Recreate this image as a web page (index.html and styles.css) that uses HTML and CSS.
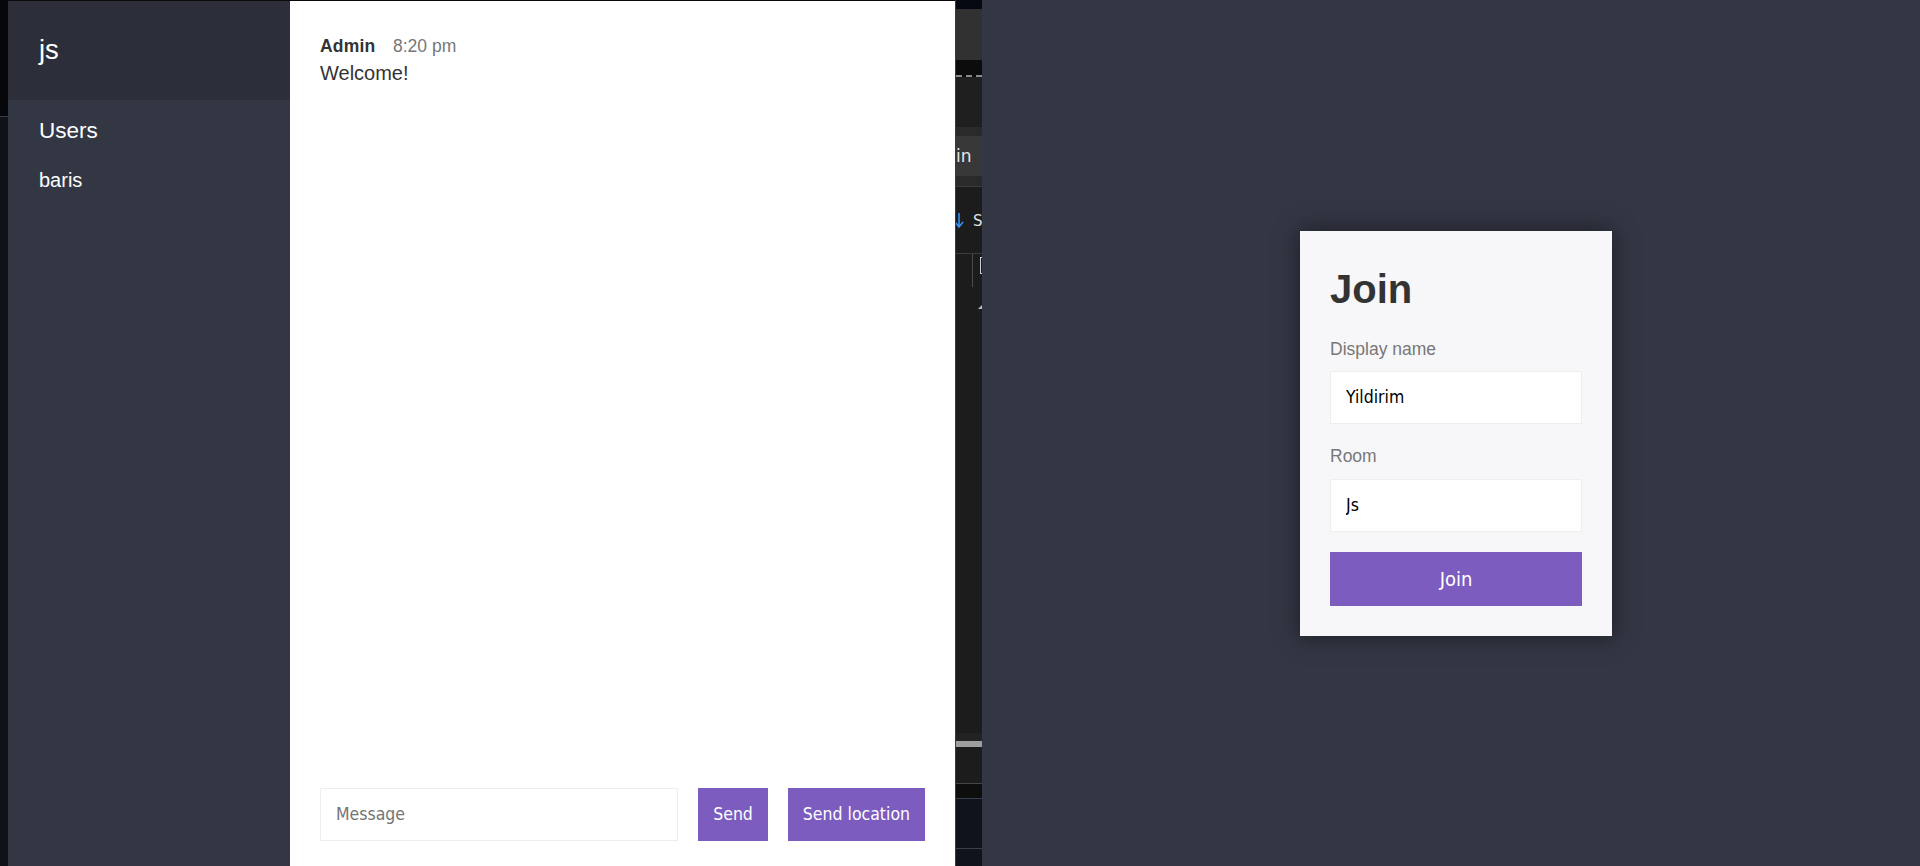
FILE: index.html
```html
<!DOCTYPE html>
<html lang="en">
<head>
<meta charset="utf-8">
<title>Chat App</title>
<link rel="stylesheet" href="styles.css">
</head>
<body>
<div class="desktop">
  <div class="edge">
    <div class="edge__top"></div>
    <div class="edge__rest"></div>
  </div>

  <div class="chat-window">
    <div class="chat">
      <aside class="chat__sidebar">
        <h2 class="room-title">js</h2>
        <h3 class="list-title">Users</h3>
        <ul class="users">
          <li>baris</li>
        </ul>
      </aside>
      <main class="chat__main">
        <div class="chat__messages">
          <div class="message">
            <p>
              <span class="message__name">Admin</span>
              <span class="message__meta">8:20 pm</span>
            </p>
            <p>Welcome!</p>
          </div>
        </div>
        <div class="compose">
          <form class="compose__form">
            <input class="compose__input" name="message" placeholder="Message" autocomplete="off">
            <button class="btn btn--small" type="button">Send</button>
          </form>
          <button class="btn btn--small" type="button">Send location</button>
        </div>
      </main>
    </div>
  </div>

  <div class="strip">
    <div class="strip__a"></div>
    <div class="strip__b"></div>
    <div class="strip__c"></div>
    <div class="strip__d"></div>
    <div class="strip__e"></div>
    <div class="strip__f"><span class="strip__text">in</span></div>
    <div class="strip__e2"></div>
    <div class="strip__g">
      <svg class="strip__arrow" width="8" height="16" viewBox="0 0 8 16"><path d="M3 0 V14 M0 10 L3 14 L7 9" fill="none" stroke="#3794ff" stroke-width="1.5"/></svg>
      <span class="strip__s">S</span>
    </div>
    <div class="strip__h">
      <span class="strip__vline"></span>
      <span class="strip__bracket"></span>
    </div>
    <div class="strip__i"><span class="strip__tick"></span></div>
    <div class="strip__j"></div>
    <div class="strip__scroll"></div>
    <div class="strip__k"></div>
    <div class="strip__l"></div>
    <div class="strip__m"></div>
    <div class="strip__n"></div>
  </div>

  <div class="join-window">
    <div class="centered-form__box">
      <h1 class="join-title">Join</h1>
      <form class="join-form">
        <label class="field-label">Display name</label>
        <input class="field-input" type="text" value="Yildirim">
        <label class="field-label">Room</label>
        <input class="field-input" type="text" value="Js">
        <button class="btn btn--join" type="button">Join</button>
      </form>
    </div>
  </div>
</div>
</body>
</html>
```

FILE: styles.css
```css
* {
  margin: 0;
  padding: 0;
  box-sizing: border-box;
}

html, body {
  height: 100%;
}

body {
  overflow: hidden;
  background: #0f1219;
  font-family: "Liberation Sans", Arial, Helvetica, sans-serif;
  color: #333333;
  line-height: 1.4;
  font-size: 20px;
}

.desktop {
  display: flex;
  height: 866px;
}

/* leftmost sliver of desktop */
.edge {
  width: 8px;
  display: flex;
  flex-direction: column;
}
.edge__top {
  height: 117px;
  background: #050609;
  border-bottom: 1px solid #3a3d44;
}
.edge__rest {
  flex-grow: 1;
  background: #0f1219;
}

/* chat window */
.chat-window {
  width: 947px;
  border-top: 1px solid #0a0a0a;
  display: flex;
  flex-direction: column;
}
.chat {
  display: flex;
  flex-grow: 1;
  min-height: 0;
}
.chat__sidebar {
  width: 282px;
  background: #333744;
  color: #ffffff;
}
.room-title {
  font-weight: 400;
  font-size: 27.5px;
  background: #2c2f3a;
  padding: 30px 30px 30px 31px;
  line-height: 1.4;
}
.list-title {
  font-weight: 400;
  font-size: 22.5px;
  margin-bottom: 5px;
  padding: 15px 30px 0 31px;
}
.users {
  list-style-type: none;
  font-weight: 300;
  font-size: 20px;
  padding: 15px 30px 0 31px;
}

.chat__main {
  flex-grow: 1;
  display: flex;
  flex-direction: column;
  background: #ffffff;
}
.chat__messages {
  flex-grow: 1;
  padding: 30px 30px 0 30px;
}
.message {
  margin-bottom: 20px;
}
.message__name {
  font-weight: 700;
  font-size: 17.5px;
  margin-right: 12px;
  color: #333333;
  letter-spacing: 0.2px;
}
.message__meta {
  color: #777777;
  font-size: 17.5px;
}

.compose {
  display: flex;
  flex-shrink: 0;
  margin-top: 20px;
  padding: 30px 30px 25px 30px;
}
.compose__form {
  display: flex;
  flex-grow: 1;
  margin-right: 20px;
}
.compose__input {
  flex-grow: 1;
  margin-right: 20px;
}

input {
  font-family: "DejaVu Sans Condensed", "DejaVu Sans", sans-serif;
  font-size: 17.5px;
  line-height: 21px;
  border: 1px solid #eeeeee;
  padding: 15px;
  outline: none;
  color: #000000;
  background: #ffffff;
  min-width: 0;
}
input::placeholder {
  color: #757575;
}

.btn {
  font-family: "DejaVu Sans Condensed", "DejaVu Sans", sans-serif;
  padding: 15px;
  background: #7c5cbf;
  border: none;
  color: #ffffff;
  cursor: pointer;
}
.btn--small {
  font-size: 17.5px;
  line-height: 21px;
}

/* background app strip */
.strip {
  width: 27px;
  display: flex;
  flex-direction: column;
  border-left: 1px solid #3a3a3a;
  overflow: hidden;
  font-family: "DejaVu Sans", sans-serif;
}
.strip__a { height: 9px; background: #070912; }
.strip__b { height: 51px; background: #313131; }
.strip__c { height: 15px; background: #0c0c0c; }
.strip__d { height: 2px; background: #0c0c0c; border-top: 2px dashed #8a8a8a; }
.strip__e { height: 59px; background: #1f1f1f; border-bottom: 9px solid #2a2a2a; }
.strip__f {
  height: 40px;
  background: #383838;
  color: #e6e6e6;
  font-size: 17px;
  line-height: 40px;
  white-space: nowrap;
}
.strip__text { display: inline-block; }
.strip__e2 { height: 11px; background: #2a2a2a; border-bottom: 1px solid #3a3a3a; }
.strip__g {
  height: 67px;
  background: #1c1c1c;
  border-bottom: 1px solid #3c3c3c;
  display: flex;
  align-items: flex-start;
  padding-top: 26px;
  white-space: nowrap;
}
.strip__arrow { flex-shrink: 0; }
.strip__s {
  margin-left: 9px;
  color: #e0e0e0;
  font-size: 15px;
  line-height: 16px;
}
.strip__h {
  height: 33px;
  background: #1c1c1c;
  display: flex;
  align-items: flex-start;
}
.strip__vline {
  width: 1px;
  height: 33px;
  margin-left: 16px;
  background: #4a4a4a;
}
.strip__bracket {
  width: 3px;
  height: 17px;
  margin-top: 3px;
  margin-left: 8px;
  border: 1px solid #cfcfcf;
  border-right: none;
}
.strip__i {
  height: 40px;
  background: #1c1c1c;
  display: flex;
  justify-content: flex-end;
  align-items: center;
}
.strip__tick {
  width: 0;
  height: 0;
  border-left: 4px solid transparent;
  border-bottom: 4px solid #bdbdbd;
}
.strip__j { flex-grow: 1; background: #1c1c1c; border-bottom: 8px solid #222222; }
.strip__scroll { height: 6px; background: #9e9e9e; }
.strip__k { height: 37px; background: #1c1c1c; border-bottom: 1px solid #454545; }
.strip__l { height: 15px; background: #0e0e0e; border-bottom: 1px solid #3a3f4b; }
.strip__m { height: 50px; background: #10131b; border-bottom: 1px solid #3a3f4b; }
.strip__n { height: 17px; background: #10131b; }

/* join window */
.join-window {
  flex-grow: 1;
  background: #333744;
  display: flex;
  justify-content: center;
  align-items: center;
  padding-left: 10px;
}
.centered-form__box {
  width: 312px;
  padding: 30px;
  background: #f7f7fa;
  box-shadow: 0 0 21px 1px #1d1f26;
}
.join-title {
  font-size: 40px;
  font-weight: 700;
  line-height: 1.4;
  margin-bottom: 20px;
  color: #333333;
}
.join-form {
  display: flex;
  flex-direction: column;
}
.field-label {
  display: block;
  font-size: 17.5px;
  margin-bottom: 10px;
  color: #777777;
}
.field-input {
  width: 100%;
  margin-bottom: 20px;
}
.btn--join {
  width: 100%;
  font-size: 20px;
  line-height: 24px;
}
```
